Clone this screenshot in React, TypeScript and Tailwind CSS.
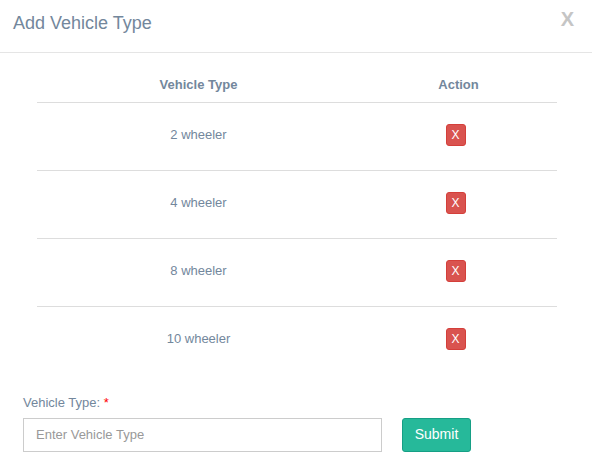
import { useState } from 'react';

const vehicleTypes = ['2 wheeler', '4 wheeler', '8 wheeler', '10 wheeler'];

export default function App() {
  const [types, setTypes] = useState(vehicleTypes);
  const [value, setValue] = useState('');

  const handleSubmit = () => {
    if (!value.trim()) return;
    setTypes([...types, value.trim()]);
    setValue('');
  };

  return (
    <div className="w-[592px] h-[472px] bg-white text-[#73879C] font-['Liberation_Sans',Arial,sans-serif] overflow-hidden">
      <div className="h-[53px] border-b border-[#e5e5e5] flex items-start justify-between pl-[13px] pr-[18px]">
        <h4 className="text-[18px] leading-[20px] mt-[13px]">Add Vehicle Type</h4>
        <button className="text-[20px] leading-[20px] font-bold text-[#c5c5c5] mt-[9px]">X</button>
      </div>

      <div className="px-[37px]">
        <table className="w-[520px] border-collapse text-[13px]">
          <thead>
            <tr className="border-b border-[#dddddd]">
              <th className="w-[323px] pt-[23px] pb-[8px] leading-[18px] font-bold">Vehicle Type</th>
              <th className="pt-[23px] pb-[8px] leading-[18px] font-bold">Action</th>
            </tr>
          </thead>
          <tbody>
            {types.map((t, i) => (
              <tr key={t} className={i < types.length - 1 ? 'border-b border-[#dddddd]' : ''}>
                <td className="h-[68px] pb-[3px] text-center align-middle leading-[18px]">{t}</td>
                <td className="h-[68px] pb-[3px] text-center align-middle">
                  <button
                    onClick={() => setTypes(types.filter((x) => x !== t))}
                    className="inline-flex items-center justify-center w-[20px] h-[22px] -mt-[3px] bg-[#d9534f] border border-[#d43f3a] rounded-[3px] text-white text-[12px] leading-none ml-[-6px]"
                  >
                    X
                  </button>
                </td>
              </tr>
            ))}
          </tbody>
        </table>
      </div>

      <div className="px-[23px] mt-[19px]">
        <label className="block text-[13px] leading-[18px]">
          Vehicle Type: <span className="text-[#ff0000]">*</span>
        </label>
        <div className="flex items-center gap-[20px] mt-[6px]">
          <input
            value={value}
            onChange={(e) => setValue(e.target.value)}
            placeholder="Enter Vehicle Type"
            className="w-[359px] h-[34px] border border-[#cccccc] px-[12px] text-[13px] text-[#555] placeholder:text-[#999999] outline-none"
          />
          <button
            onClick={handleSubmit}
            className="w-[69px] h-[34px] bg-[#26B99A] border border-[#169F85] rounded-[3px] text-white text-[14px]"
          >
            Submit
          </button>
        </div>
      </div>
    </div>
  );
}
